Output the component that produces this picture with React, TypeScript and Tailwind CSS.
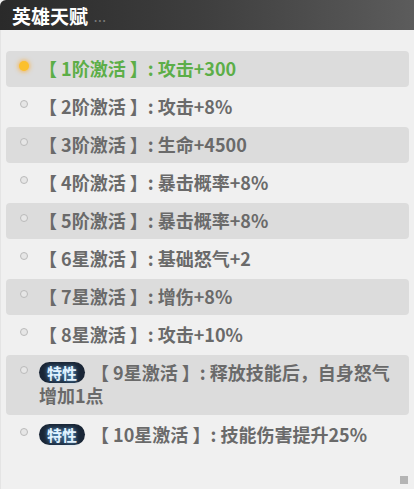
import React from 'react';

type Talent = {
  rank: string;
  effect: string;
  trait?: boolean;
  active?: boolean;
};

const talents: Talent[] = [
  { rank: '1阶激活', effect: '攻击+300', active: true },
  { rank: '2阶激活', effect: '攻击+8%' },
  { rank: '3阶激活', effect: '生命+4500' },
  { rank: '4阶激活', effect: '暴击概率+8%' },
  { rank: '5阶激活', effect: '暴击概率+8%' },
  { rank: '6星激活', effect: '基础怒气+2' },
  { rank: '7星激活', effect: '增伤+8%' },
  { rank: '8星激活', effect: '攻击+10%' },
  { rank: '9星激活', effect: '释放技能后，自身怒气增加1点', trait: true },
  { rank: '10星激活', effect: '技能伤害提升25%', trait: true },
];

function Dot({ active }: { active?: boolean }) {
  if (active) {
    return (
      <span className="mt-[4px] ml-[13px] mr-[10px] h-[10px] w-[10px] shrink-0 rounded-full bg-[#fbc02d] shadow-[0_0_4px_1px_rgba(255,170,40,0.7)]" />
    );
  }
  return (
    <span className="mt-[5px] ml-[14px] mr-[11px] h-[8px] w-[8px] shrink-0 rounded-full border border-[#bababa] bg-[#e6e6e6]" />
  );
}

function TraitBadge() {
  return (
    <span className="mr-[6px] inline-block h-[21px] rounded-full bg-[#1a2636] px-[8px] align-[1px] text-[15px] leading-[21px] text-[#e2f3ff] [text-shadow:0_0_4px_rgba(110,190,255,0.9)]">
      特性
    </span>
  );
}

function TalentRow({ talent, shaded }: { talent: Talent; shaded: boolean }) {
  const color = talent.active ? 'text-[#5cae48]' : 'text-[#6a6a6a]';
  const tall = talent.rank.startsWith('9');
  return (
    <div
      className={`flex items-start rounded-[4px] pt-[6px] pr-[4px] ${shaded ? 'bg-[#dcdcdc]' : ''} ${
        tall ? 'h-[60px]' : 'h-[36px]'
      }`}
    >
      <Dot active={talent.active} />
      <p className={`flex-1 text-[18px] leading-[23px] font-bold ${color}`}>
        {talent.trait && <TraitBadge />}
        【 {talent.rank} 】: {talent.effect}
      </p>
    </div>
  );
}

export default function App() {
  return (
    <div
      className="flex h-[489px] w-[414px] flex-col overflow-hidden bg-[#f0f0f0]"
      style={{ fontFamily: '"Noto Sans CJK SC", "Noto Sans", sans-serif' }}
    >
      {/* title bar */}
      <div className="flex h-[30px] shrink-0 items-center rounded-tl-[6px] bg-gradient-to-r from-[#2a2a2a] via-[#3f3f3f] to-[#5c5c5c] pl-[12px]">
        <span className="text-[19px] leading-none font-bold text-white">英雄天赋</span>
        <span className="ml-[6px] mt-[6px] text-[10px] leading-none font-bold tracking-[1px] text-[#7a7a7a]">...</span>
      </div>

      <div className="relative flex-1 border-l border-[#e4e4e4] px-[5px] pt-[21px]">
        <div className="flex flex-col gap-[2px]">
          {talents.map((t, i) => (
            <TalentRow key={t.rank} talent={t} shaded={i % 2 === 0} />
          ))}
        </div>
        {/* corner grip */}
        <span className="absolute right-[6px] bottom-[5px] h-[8px] w-[8px] bg-[#b4b4b4]" />
      </div>
    </div>
  );
}
